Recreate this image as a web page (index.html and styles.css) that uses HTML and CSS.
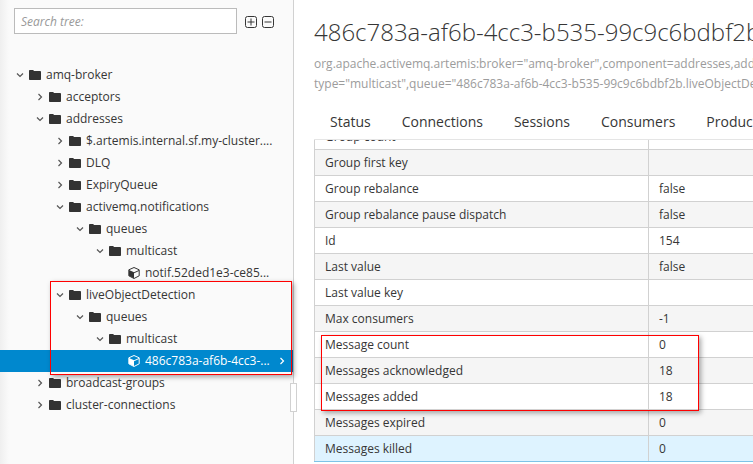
FILE: index.html
```html
<!DOCTYPE html>
<html lang="en">
<head>
<meta charset="utf-8">
<title>Artemis</title>
<link rel="stylesheet" href="styles.css">
</head>
<body>
<svg class="defs" width="0" height="0" aria-hidden="true">
  <symbol id="folder" viewBox="0 0 12 10"><path d="M0 .8C0 .3.3 0 .8 0h3c.4 0 .7.2.9.5l.4.6h6.100c.5 0 .8.3.8.8v7.300c0 .5-.3.8-.8.8H.8C.3 10 0 9.700 0 9.200z"/></symbol>
  <symbol id="right" viewBox="0 0 8 10"><path d="M2.500 2 5.500 5 2.500 8" fill="none" stroke="currentColor" stroke-width="1.200"/></symbol>
  <symbol id="down" viewBox="0 0 10 8"><path d="M2 2.500 5 5.500 8 2.500" fill="none" stroke="currentColor" stroke-width="1.200"/></symbol>
  <symbol id="cube" viewBox="0 0 12 12"><path d="M6 .5 11.200 2.800v6L6 11.500.8 8.800v-6z" fill="none" stroke="currentColor" stroke-width="1"/><path d="M1 3 6 5.300v6L1 8.800z"/><path d="M6 5.300 11 3v1L6 6.200z"/></symbol>
</svg>
<aside class="sidebar">
  <div class="search-row">
    <div class="search">Search tree:</div>
    <svg class="tool" viewBox="0 0 12 12"><rect x=".5" y=".5" width="11" height="11" rx="2"/><path d="M2.500 6h7M6 2.500v7"/></svg>
    <svg class="tool" viewBox="0 0 12 12"><rect x=".5" y=".5" width="11" height="11" rx="2"/><path d="M2.500 6h7"/></svg>
  </div>
  <ul class="tree">
    <li class="node l0"><svg class="chev"><use href="#down"/></svg><svg class="folder"><use href="#folder"/></svg><span>amq-broker</span></li>
    <li class="node l1"><svg class="chev"><use href="#right"/></svg><svg class="folder"><use href="#folder"/></svg><span>acceptors</span></li>
    <li class="node l1"><svg class="chev"><use href="#down"/></svg><svg class="folder"><use href="#folder"/></svg><span>addresses</span></li>
    <li class="node l2"><svg class="chev"><use href="#right"/></svg><svg class="folder"><use href="#folder"/></svg><span>$.artemis.internal.sf.my-cluster....</span></li>
    <li class="node l2"><svg class="chev"><use href="#right"/></svg><svg class="folder"><use href="#folder"/></svg><span>DLQ</span></li>
    <li class="node l2"><svg class="chev"><use href="#right"/></svg><svg class="folder"><use href="#folder"/></svg><span>ExpiryQueue</span></li>
    <li class="node l2"><svg class="chev"><use href="#down"/></svg><svg class="folder"><use href="#folder"/></svg><span>activemq.notifications</span></li>
    <li class="node l3"><svg class="chev"><use href="#down"/></svg><svg class="folder"><use href="#folder"/></svg><span>queues</span></li>
    <li class="node l4"><svg class="chev"><use href="#down"/></svg><svg class="folder"><use href="#folder"/></svg><span>multicast</span></li>
    <li class="node l5"><svg class="cube"><use href="#cube"/></svg><span>notif.52ded1e3-ce85...</span></li>
    <li class="node l2"><svg class="chev"><use href="#down"/></svg><svg class="folder"><use href="#folder"/></svg><span>liveObjectDetection</span></li>
    <li class="node l3"><svg class="chev"><use href="#down"/></svg><svg class="folder"><use href="#folder"/></svg><span>queues</span></li>
    <li class="node l4"><svg class="chev"><use href="#down"/></svg><svg class="folder"><use href="#folder"/></svg><span>multicast</span></li>
    <li class="node l5 selected"><svg class="cube"><use href="#cube"/></svg><span>486c783a-af6b-4cc3-...</span><svg class="sel-chev"><use href="#right"/></svg></li>
    <li class="node l1"><svg class="chev"><use href="#right"/></svg><svg class="folder"><use href="#folder"/></svg><span>broadcast-groups</span></li>
    <li class="node l1"><svg class="chev"><use href="#right"/></svg><svg class="folder"><use href="#folder"/></svg><span>cluster-connections</span></li>
  </ul>
  <div class="grip"></div>
</aside>
<main class="main">
  <h1 class="title">486c783a-af6b-4cc3-b535-99c9c6bdbf2b</h1>
  <p class="subtitle">org.apache.activemq.artemis:broker="amq-broker",component=addresses,address="liveObjectDetection",subcomponent=queues,routing-<br>type="multicast",queue="486c783a-af6b-4cc3-b535-99c9c6bdbf2b.liveObjectDetection"</p>
  <nav class="tabs">
    <span>Status</span><span>Connections</span><span>Sessions</span><span>Consumers</span><span>Producers</span>
  </nav>
  <div class="table-view">
    <table class="attrs">
      <tr><td>Group count</td><td>-</td></tr>
      <tr class="alt"><td>Group first key</td><td></td></tr>
      <tr><td>Group rebalance</td><td>false</td></tr>
      <tr class="alt"><td>Group rebalance pause dispatch</td><td>false</td></tr>
      <tr><td>Id</td><td>154</td></tr>
      <tr class="alt"><td>Last value</td><td>false</td></tr>
      <tr><td>Last value key</td><td></td></tr>
      <tr class="alt"><td>Max consumers</td><td>-1</td></tr>
      <tr><td>Message count</td><td>0</td></tr>
      <tr class="alt"><td>Messages acknowledged</td><td>18</td></tr>
      <tr><td>Messages added</td><td>18</td></tr>
      <tr class="alt"><td>Messages expired</td><td>0</td></tr>
      <tr class="hover"><td>Messages killed</td><td>0</td></tr>
    </table>
  </div>
</main>
<div class="mark mark-tree"></div>
<div class="mark mark-table"></div>
</body>
</html>
```
FILE: styles.css
```css
* { box-sizing: border-box; }
html, body { margin: 0; height: 100%; }
body {
  display: flex;
  width: 753px;
  height: 464px;
  overflow: hidden;
  position: relative;
  background: #fff;
  color: #363636;
  font: 12px/22px "Open Sans", sans-serif;
}
.defs { position: absolute; }
.sidebar {
  position: relative;
  flex: 0 0 294px;
  padding-top: 8px;
  background: linear-gradient(to right, #efefef, #fafafa 9px);
  border-right: 1px solid #d1d1d1;
}
.search-row { display: flex; align-items: center; padding-left: 14px; gap: 5px; }
.search {
  flex: 0 0 223px;
  height: 26px;
  margin-right: 3px;
  padding-left: 6px;
  border: 1px solid #bbb;
  background: #fff;
  color: #999;
  font-style: italic;
  line-height: 25px;
}
.tool { width: 12px; height: 12px; margin-top: 2px; fill: none; stroke: #363636; stroke-width: 1; }
.tree { list-style: none; margin: 30px 0 0; padding: 0; }
.node { display: flex; align-items: center; height: 22px; white-space: nowrap; }
.l0 { padding-left: 15px; }
.l1 { padding-left: 35px; }
.l2 { padding-left: 55px; }
.l3 { padding-left: 75px; }
.l4 { padding-left: 95px; }
.l5 { padding-left: 128px; }
.chev { width: 10px; height: 10px; margin-right: 4px; color: #555; }
.folder { width: 12px; height: 10px; margin-right: 5px; fill: #333; }
.cube { width: 12px; height: 12px; margin-right: 5px; fill: currentColor; color: #333; }
.selected { background: #0088ce; color: #fff; }
.selected .cube { color: #fff; }
.sel-chev { width: 8px; height: 10px; margin-left: 8px; color: #fff; }
.grip {
  position: absolute;
  left: 290px;
  top: 383px;
  width: 7px;
  height: 29px;
  background: #fff;
  border: 1px solid #d1d1d1;
}
.main { flex: 1; min-width: 0; padding: 15px 0 0 20px; overflow: hidden; white-space: nowrap; }
.title { margin: 0; font-size: 24px; font-weight: 300; line-height: 34px; color: #363636; }
.subtitle { margin: 5px 0 0; line-height: 20px; color: #9c9c9c; }
.tabs { display: flex; gap: 31px; margin-top: 15px; padding-left: 16px; height: 30px; font-size: 14px; line-height: 26px; }
.table-view { height: 325px; overflow: hidden; border-top: 1px solid #e5e5e5; }
.attrs { width: 500px; margin-top: -17px; border-collapse: collapse; table-layout: fixed; }
.attrs td { height: 26px; padding: 0 10px; border: 1px solid #d1d1d1; line-height: 18px; }
.attrs td:first-child { width: 334px; }
.attrs .alt { background: #f5f5f5; }
.attrs .hover { background: #def3ff; }
.attrs .hover td { border-bottom-color: #7dc3e8; }
.mark {
  position: absolute;
  border: 1px solid #f00;
  box-shadow: 2px 2px 5px rgba(0, 0, 0, .35);
}
.mark-tree { left: 50px; top: 281px; width: 242px; height: 94px; }
.mark-table { left: 321px; top: 335px; width: 378px; height: 76px; }
```
